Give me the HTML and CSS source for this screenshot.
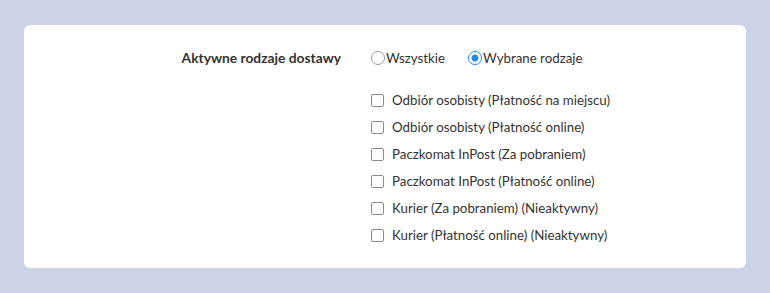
FILE: index.html
```html
<!DOCTYPE html>
<html lang="pl">
<head>
  <meta charset="UTF-8">
  <title>Rodzaje dostawy</title>
  <link rel="stylesheet" href="styles.css">
</head>
<body>
  <div class="card">
    <div class="row">
      <div class="label">Aktywne rodzaje dostawy</div>
      <div class="field">
        <div class="radios">
          <label class="radio"><span class="dot"></span>Wszystkie</label>
          <label class="radio on"><span class="dot"></span>Wybrane rodzaje</label>
        </div>
        <div class="checks">
          <label class="check"><span class="box"></span>Odbiór osobisty (Płatność na miejscu)</label>
          <label class="check"><span class="box"></span>Odbiór osobisty (Płatność online)</label>
          <label class="check"><span class="box"></span>Paczkomat InPost (Za pobraniem)</label>
          <label class="check"><span class="box"></span>Paczkomat InPost (Płatność online)</label>
          <label class="check"><span class="box"></span>Kurier (Za pobraniem) (Nieaktywny)</label>
          <label class="check"><span class="box"></span>Kurier (Płatność online) (Nieaktywny)</label>
        </div>
      </div>
    </div>
  </div>
</body>
</html>
```

FILE: styles.css
```css
body {
  margin: 0;
  background-color: #cdd3e6;
  font-family: 'Lato', sans-serif;
  font-size: 13.3px;
  color: #333;
  padding: 25px 24px;
}

.card {
  background-color: #fff;
  border-radius: 6px;
  height: 243px;
  box-sizing: border-box;
  padding-top: 24px;
}

.row {
  display: flex;
}

.label {
  width: 317px;
  text-align: right;
  font-weight: bold;
  font-size: 13.8px;
  line-height: 18px;
}

.field {
  margin-left: 30px;
}

.radios {
  display: flex;
  gap: 23px;
  height: 18px;
  align-items: center;
}

.radio, .check {
  display: flex;
  align-items: center;
}

.dot {
  flex-shrink: 0;
  box-sizing: border-box;
  width: 14px;
  height: 14px;
  border: 1.5px solid #9a9a9a;
  border-radius: 50%;
  margin-right: 1px;
}

.radio.on .dot {
  border-color: #1e8bf0;
  background: radial-gradient(circle, #1e8bf0 0 3.2px, #fff 3.8px);
}

.checks {
  margin-top: 24px;
  display: flex;
  flex-direction: column;
  gap: 9px;
}

.check {
  height: 18px;
}

.box {
  flex-shrink: 0;
  box-sizing: border-box;
  width: 13px;
  height: 13px;
  border: 1px solid #8a8a8a;
  border-radius: 2px;
  margin-right: 8px;
}
```
